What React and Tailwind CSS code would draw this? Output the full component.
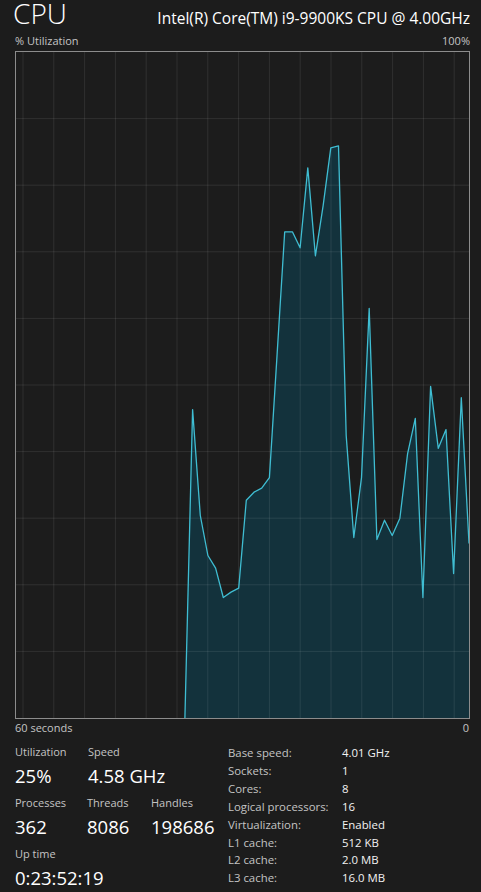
import React from "react";

// CPU usage over the last 60 seconds, oldest sample first (percent)
const SAMPLES = 60;
const usage = [
  ...Array(22).fill(null),
  0, 46.3, 30.4, 24.4, 22.5, 18.1, 18.9, 19.5, 32.7, 33.9,
  34.5, 36.1, 54.6, 73.0, 73.0, 70.6, 82.6, 69.4, 76.9, 85.6,
  85.9, 42.4, 27.1, 36.1, 61.5, 26.8, 29.7, 27.4, 30.0, 39.7,
  45.0, 18.1, 49.8, 40.5, 43.3, 21.7, 48.1, 26.2,
];

const W = 453;
const H = 666;

function UsageGraph() {
  const step = W / (SAMPLES - 1);
  const pts = usage
    .map((v, i) => (v === null ? null : [i * step, H - (v / 100) * H]))
    .filter(Boolean);
  const line = pts.map(([x, y]) => `${x.toFixed(1)},${y.toFixed(1)}`).join(" ");
  const first = pts[0][0].toFixed(1);
  const last = pts[pts.length - 1][0].toFixed(1);
  const area = `${first},${H} ${line} ${last},${H}`;

  const rows = Array.from({ length: 9 }, (_, k) => ((k + 1) * H) / 10);
  const cols = Array.from({ length: 15 }, (_, k) => 7 + k * 30.8);

  return (
    <svg width={W} height={H} viewBox={`0 0 ${W} ${H}`} className="block">
      <polygon points={area} fill="#13323c" />
      {rows.map((y) => (
        <line key={y} x1="0" x2={W} y1={y} y2={y} stroke="rgba(255,255,255,0.09)" strokeWidth="1" />
      ))}
      {cols.map((x) => (
        <line key={x} x1={x} x2={x} y1="0" y2={H} stroke="rgba(255,255,255,0.09)" strokeWidth="1" />
      ))}
      <polyline points={line} fill="none" stroke="#3fbdd2" strokeWidth="1.3" strokeLinejoin="round" />
    </svg>
  );
}

function Stat({ label, value, className = "" }) {
  return (
    <div className={className}>
      <div className="h-[16px] leading-[16px] text-[11px] text-[#c4c4c4]">{label}</div>
      <div className="mt-[4px] h-[24px] leading-[24px] text-[18.5px] text-white">{value}</div>
    </div>
  );
}

const specs = [
  ["Base speed:", "4.01 GHz"],
  ["Sockets:", "1"],
  ["Cores:", "8"],
  ["Logical processors:", "16"],
  ["Virtualization:", "Enabled"],
  ["L1 cache:", "512 KB"],
  ["L2 cache:", "2.0 MB"],
  ["L3 cache:", "16.0 MB"],
];

export default function App() {
  return (
    <div className="w-[481px] h-[892px] overflow-hidden bg-[#1c1c1c] text-white font-['Open_Sans',sans-serif]">
      <div className="flex items-baseline justify-between h-[35px] -mt-[3px] pl-[13px] pr-[11px]">
        <span className="text-[28px] leading-[32px] font-light">CPU</span>
        <span className="text-[15.5px] leading-[32px]">Intel(R) Core(TM) i9-9900KS CPU @ 4.00GHz</span>
      </div>
      <div className="flex items-center justify-between h-[19px] pl-[15px] pr-[11px] text-[11px] text-[#c4c4c4]">
        <span>% Utilization</span>
        <span>100%</span>
      </div>
      <div className="ml-[15px] w-[455px] h-[668px] border border-[#8c8c8c]">
        <UsageGraph />
      </div>
      <div className="flex items-center justify-between h-[19px] pl-[15px] pr-[12px] text-[11px] text-[#c4c4c4]">
        <span>60 seconds</span>
        <span>0</span>
      </div>

      <div className="flex pl-[15px] pt-[6px]">
        <div className="w-[213px] flex flex-col gap-[7px]">
          <div className="flex">
            <Stat label="Utilization" value="25%" className="w-[73px]" />
            <Stat label="Speed" value="4.58 GHz" />
          </div>
          <div className="flex">
            <Stat label="Processes" value="362" className="w-[72px]" />
            <Stat label="Threads" value="8086" className="w-[64px]" />
            <Stat label="Handles" value="198686" />
          </div>
          <Stat label="Up time" value="0:23:52:19" />
        </div>
        <div className="flex flex-col">
          {specs.map(([k, v]) => (
            <div key={k} className="flex h-[17.85px] items-center text-[11.4px]">
              <span className="w-[114px] text-[#c4c4c4]">{k}</span>
              <span className="text-[#f2f2f2]">{v}</span>
            </div>
          ))}
        </div>
      </div>
    </div>
  );
}
